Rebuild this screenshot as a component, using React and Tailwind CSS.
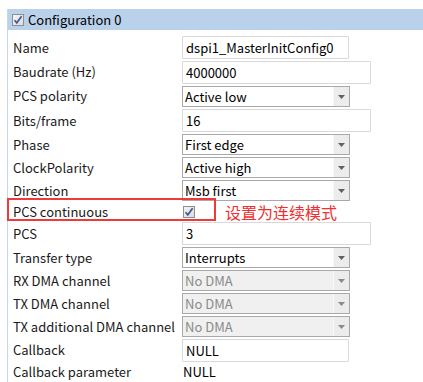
import React from "react";

const font = { fontFamily: '"Noto Sans CJK SC", "Noto Sans", sans-serif' };

function Check({ className = "" }) {
  return (
    <div className={"w-[12px] h-[12px] border border-[#8e8f8f] bg-gradient-to-br from-[#f4f4f4] to-[#dcdcdc] flex items-center justify-center " + className}>
      <svg width="10" height="10" viewBox="0 0 10 10">
        <path d="M1.5 5.2 L3.8 7.8 L8.6 1.2" fill="none" stroke="#3c5a9a" strokeWidth="1.7" />
      </svg>
    </div>
  );
}

function TextBox({ value, w = "w-[167px]" }) {
  return (
    <div className={"h-[23px] border border-[#d9d9d9] rounded-[1px] bg-white flex items-center pl-[3px] text-[13px] text-black " + w}>
      {value}
    </div>
  );
}

function Select({ value, disabled }) {
  return (
    <div className={"h-[21px] w-[168px] border border-[#a9a9a9] flex items-stretch " + (disabled ? "bg-[#f0f0f0] text-[#8a8a8a]" : "bg-white text-black")}>
      <div className="flex-1 flex items-center pl-[2px] text-[13px]">{value}</div>
      <div className="w-[16px] bg-[#ececec] border-l border-[#f8f8f8] flex items-center justify-center">
        <svg width="7" height="4" viewBox="0 0 7 4">
          <path d="M0 0 H7 L3.5 4 Z" fill={disabled ? "#8a8a8a" : "#606060"} />
        </svg>
      </div>
    </div>
  );
}

function Row({ label, h, children, pt = "pt-[1px]" }) {
  return (
    <div className={"flex " + h}>
      <div className="w-[174px] pl-[5px] flex items-center text-[13px] text-[#1a1a1a] whitespace-nowrap">{label}</div>
      <div className={"flex items-start " + pt}>{children}</div>
    </div>
  );
}

export default function App() {
  return (
    <div className="w-[423px] h-[382px] bg-white overflow-hidden relative" style={font}>
      <div className="mt-[9px] ml-[7px] border-l border-[#c9d7e6] h-[373px]">
        <div className="h-[21px] bg-[#b9d1ea] flex items-center pl-[4px] gap-[4px]">
          <Check />
          <span className="text-[13px] text-black">Configuration 0</span>
        </div>
        <div className="pt-[5px] flex flex-col">
          <Row label="Name" h="h-[25px]"><TextBox value="dspi1_MasterInitConfig0" /></Row>
          <Row label="Baudrate (Hz)" h="h-[24px]"><TextBox value="4000000" w="w-[189px]" /></Row>
          <Row label="PCS polarity" h="h-[24px]" pt="pt-[2px]"><Select value="Active low" /></Row>
          <Row label="Bits/frame" h="h-[25px]"><TextBox value="16" w="w-[189px]" /></Row>
          <Row label="Phase" h="h-[23px]" pt="pt-[1px]"><Select value="First edge" /></Row>
          <Row label="ClockPolarity" h="h-[23px]" pt="pt-[1px]"><Select value="Active high" /></Row>
          <Row label="Direction" h="h-[23px]" pt="pt-[1px]"><Select value="Msb first" /></Row>
          <Row label="PCS continuous" h="h-[20px]" pt="pt-[0px]">
            <div className="h-[20px] flex items-center">
              <Check className="ml-[1px]" />
              <span className="ml-[30px] text-[16px] text-[#f03030] leading-none">设置为连续模式</span>
            </div>
          </Row>
          <Row label="PCS" h="h-[24px]" pt="pt-[0px]"><TextBox value="3" w="w-[189px]" /></Row>
          <Row label="Transfer type" h="h-[23px]" pt="pt-[1px]"><Select value="Interrupts" /></Row>
          <Row label="RX DMA channel" h="h-[23px]" pt="pt-[1px]"><Select value="No DMA" disabled /></Row>
          <Row label="TX DMA channel" h="h-[23px]" pt="pt-[1px]"><Select value="No DMA" disabled /></Row>
          <Row label="TX additional DMA channel" h="h-[23px]" pt="pt-[1px]"><Select value="No DMA" disabled /></Row>
          <Row label="Callback" h="h-[24px]" pt="pt-[1px]"><TextBox value="NULL" /></Row>
          <Row label="Callback parameter" h="h-[20px]" pt="pt-[0px]">
            <div className="h-[20px] flex items-center pl-[1px] text-[13px] text-black">NULL</div>
          </Row>
        </div>
      </div>
      <div className="absolute left-[7px] top-[198px] w-[209px] h-[23px] border-[2px] border-solid border-[#f03a3a]" />
    </div>
  );
}
